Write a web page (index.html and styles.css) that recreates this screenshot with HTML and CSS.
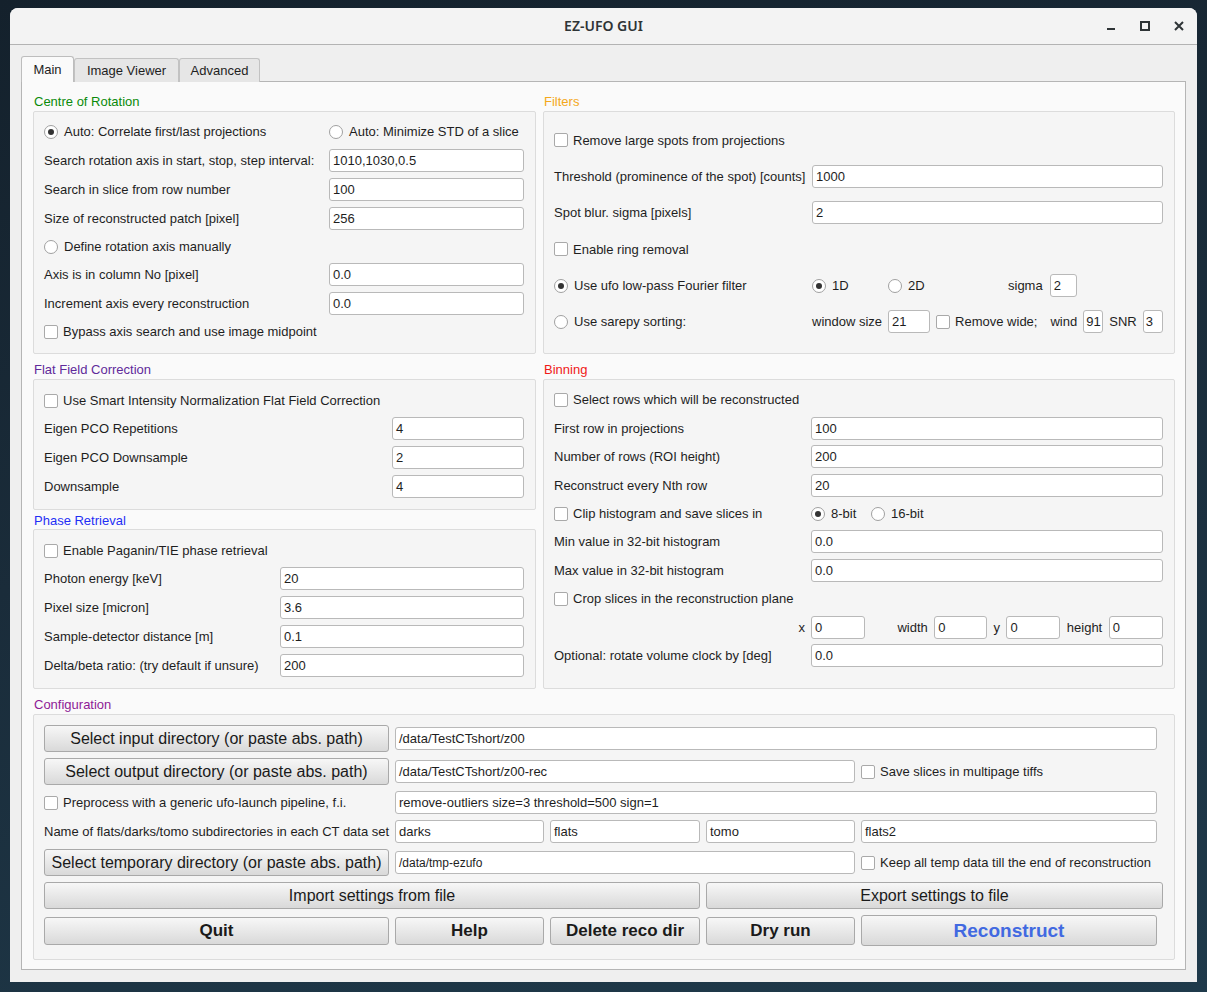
FILE: index.html
```html
<!DOCTYPE html>
<html>
<head>
<meta charset="utf-8">
<title>EZ-UFO GUI</title>
<link rel="stylesheet" href="styles.css">
</head>
<body>
<div class="desktop">
  <div class="window">
    <div class="titlebar">
      <span class="title">EZ-UFO GUI</span>
      <div class="wctl">
        <svg width="12" height="12" viewBox="0 0 12 12"><rect x="2" y="8" width="8" height="2" fill="#2e3436"/></svg>
        <svg width="12" height="12" viewBox="0 0 12 12"><rect x="2" y="2" width="8" height="8" fill="none" stroke="#2e3436" stroke-width="2"/></svg>
        <svg width="12" height="12" viewBox="0 0 12 12"><path d="M2 2 L10 10 M10 2 L2 10" stroke="#2e3436" stroke-width="2"/></svg>
      </div>
    </div>
    <div class="body">
      <div class="tabs">
        <div class="tab active t-main">Main</div>
        <div class="tab t-iv">Image Viewer</div>
        <div class="tab t-adv">Advanced</div>
      </div>
      <div class="pane">
        <div class="top">
          <div class="col">
            <div class="gtitle green">Centre of Rotation</div>
            <div class="gbox centre">
              <div class="row"><span class="radio on"></span><span>Auto: Correlate first/last projections</span></div>
              <div class="row"><span class="radio"></span><span>Auto: Minimize STD of a slice</span></div>
              <div class="row">Search rotation axis in start, stop, step interval:</div>
              <div class="inp">1010,1030,0.5</div>
              <div class="row">Search in slice from row number</div>
              <div class="inp">100</div>
              <div class="row">Size of reconstructed patch [pixel]</div>
              <div class="inp">256</div>
              <div class="row short span2"><span class="radio"></span><span>Define rotation axis manually</span></div>
              <div class="row">Axis is in column No [pixel]</div>
              <div class="inp">0.0</div>
              <div class="row">Increment axis every reconstruction</div>
              <div class="inp">0.0</div>
              <div class="row short span2"><span class="check"></span><span>Bypass axis search and use image midpoint</span></div>
            </div>
            <div class="gtitle purple sp7">Flat Field Correction</div>
            <div class="gbox flat">
              <div class="row short span2"><span class="check"></span><span>Use Smart Intensity Normalization Flat Field Correction</span></div>
              <div class="row">Eigen PCO Repetitions</div>
              <div class="inp">4</div>
              <div class="row">Eigen PCO Downsample</div>
              <div class="inp">2</div>
              <div class="row">Downsample</div>
              <div class="inp">4</div>
            </div>
            <div class="gtitle blue sp2">Phase Retrieval</div>
            <div class="gbox phase">
              <div class="row short span2"><span class="check"></span><span>Enable Paganin/TIE phase retrieval</span></div>
              <div class="row">Photon energy [keV]</div>
              <div class="inp">20</div>
              <div class="row">Pixel size [micron]</div>
              <div class="inp">3.6</div>
              <div class="row">Sample-detector distance [m]</div>
              <div class="inp">0.1</div>
              <div class="row">Delta/beta ratio: (try default if unsure)</div>
              <div class="inp">200</div>
            </div>
          </div>
          <div class="col right">
            <div class="gtitle orange">Filters</div>
            <div class="gbox filters">
              <div class="row span2"><span class="check"></span><span>Remove large spots from projections</span></div>
              <div class="row">Threshold (prominence of the spot) [counts]</div>
              <div class="inp">1000</div>
              <div class="row">Spot blur. sigma [pixels]</div>
              <div class="inp">2</div>
              <div class="row span2"><span class="check"></span><span>Enable ring removal</span></div>
              <div class="row"><span class="radio on"></span><span>Use ufo low-pass Fourier filter</span></div>
              <div class="row">
                <span class="opt w76"><span class="radio on"></span><span>1D</span></span>
                <span class="opt w114"><span class="radio"></span><span>2D</span></span>
                <span class="lbl sg">sigma</span>
                <span class="inp w27">2</span>
              </div>
              <div class="row"><span class="radio"></span><span>Use sarepy sorting:</span></div>
              <div class="row">
                <span class="lbl">window size</span>
                <span class="inp w42">21</span>
                <span class="check"></span><span class="lbl wide">Remove wide;</span>
                <span class="lbl">wind</span>
                <span class="inp w20">91</span>
                <span class="lbl">SNR</span>
                <span class="inp w20">3</span>
              </div>
            </div>
            <div class="gtitle red sp7">Binning</div>
            <div class="gbox binning">
              <div class="row span2"><span class="check"></span><span>Select rows which will be reconstructed</span></div>
              <div class="row">First row in projections</div>
              <div class="inp">100</div>
              <div class="row">Number of rows (ROI height)</div>
              <div class="inp">200</div>
              <div class="row">Reconstruct every Nth row</div>
              <div class="inp">20</div>
              <div class="row"><span class="check"></span><span>Clip histogram and save slices in</span></div>
              <div class="row">
                <span class="opt w54o"><span class="radio on"></span><span>8-bit</span></span>
                <span class="opt"><span class="radio"></span><span>16-bit</span></span>
              </div>
              <div class="row">Min value in 32-bit histogram</div>
              <div class="inp">0.0</div>
              <div class="row">Max value in 32-bit histogram</div>
              <div class="inp">0.0</div>
              <div class="row span2"><span class="check"></span><span>Crop slices in the reconstruction plane</span></div>
              <div class="row endx">x</div>
              <div class="row crop">
                <span class="inp w54">0</span>
                <span class="lbl cw">width</span>
                <span class="inp w53">0</span>
                <span class="lbl">y</span>
                <span class="inp w54">0</span>
                <span class="lbl">height</span>
                <span class="inp w54">0</span>
              </div>
              <div class="row">Optional: rotate volume clock by [deg]</div>
              <div class="inp">0.0</div>
            </div>
          </div>
        </div>
        <div class="gtitle magenta sp7">Configuration</div>
        <div class="gbox config">
          <div class="btn big">Select input directory (or paste abs. path)</div>
          <div class="inp c2-6">/data/TestCTshort/z00</div>

          <div class="btn big">Select output directory (or paste abs. path)</div>
          <div class="inp c2-5">/data/TestCTshort/z00-rec</div>
          <div class="row"><span class="check"></span><span>Save slices in multipage tiffs</span></div>

          <div class="row"><span class="check"></span><span>Preprocess with a generic ufo-launch pipeline, f.i.</span></div>
          <div class="inp c2-6">remove-outliers size=3 threshold=500 sign=1</div>

          <div class="row">Name of flats/darks/tomo subdirectories in each CT data set</div>
          <div class="inp">darks</div>
          <div class="inp">flats</div>
          <div class="inp">tomo</div>
          <div class="inp">flats2</div>

          <div class="btn big">Select temporary directory (or paste abs. path)</div>
          <div class="inp c2-5 small">/data/tmp-ezufo</div>
          <div class="row"><span class="check"></span><span>Keep all temp data till the end of reconstruction</span></div>

          <div class="btn big c1-4">Import settings from file</div>
          <div class="btn big c4-6 ext">Export settings to file</div>

          <div class="btn bold">Quit</div>
          <div class="btn bold">Help</div>
          <div class="btn bold">Delete reco dir</div>
          <div class="btn bold">Dry run</div>
          <div class="btn bold recon">Reconstruct</div>
        </div>
      </div>
    </div>
  </div>
</div>
</body>
</html>
```
FILE: styles.css
```css
* { box-sizing: border-box; }
html, body { margin: 0; padding: 0; }
body {
  width: 1207px;
  height: 992px;
  overflow: hidden;
  font-family: "Liberation Sans", Arial, sans-serif;
  font-size: 13px;
  color: #1e1e1e;
}
.desktop {
  width: 1207px;
  height: 992px;
  background: linear-gradient(165deg, #14212c 0%, #1a2c3a 45%, #1f3a4b 100%);
  padding: 8px 10px 10px 10px;
}
.window {
  width: 1187px;
  height: 974px;
  border-radius: 8px 8px 0 0;
  overflow: hidden;
  display: flex;
  flex-direction: column;
  background: #efefef;
}
.titlebar {
  height: 37px;
  flex: none;
  background: #f3f3f3;
  border-bottom: 1px solid #b3b3b3;
  display: flex;
  align-items: center;
  justify-content: center;
  position: relative;
}
.title {
  font-family: "Noto Sans", "DejaVu Sans", sans-serif;
  font-weight: 600;
  font-size: 14px;
  color: #2e3436;
  margin-top: -1px;
}
.wctl {
  position: absolute;
  right: 12px;
  top: 12px;
  display: flex;
  gap: 22px;
}
.wctl svg { display: block; }
.body {
  flex: 1;
  padding: 11px 11px 12px 11px;
  display: flex;
  flex-direction: column;
}
.tabs {
  display: flex;
  align-items: flex-end;
  height: 26px;
  position: relative;
  z-index: 1;
  margin-bottom: -1px;
}
.tab {
  height: 24px;
  background: #e6e6e6;
  border: 1px solid #c2c2c2;
  border-bottom: none;
  border-radius: 3px 3px 0 0;
  display: flex;
  align-items: center;
  justify-content: center;
  color: #1e1e1e;
}
.t-main { width: 53px; }
.t-iv { width: 105px; }
.t-adv { width: 81px; }
.tab.active {
  height: 26px;
  background: #fafafa;
  border-color: #bdbdbd;
  position: relative;
  z-index: 2;
}
.pane {
  flex: 1;
  background: #fafafa;
  border: 1px solid #b5b5b5;
  padding: 11px 10px 9px 11px;
  display: flex;
  flex-direction: column;
}
.top {
  display: grid;
  grid-template-columns: 503px 632px;
  column-gap: 7px;
}
.col { display: flex; flex-direction: column; }
.gtitle {
  height: 18px;
  line-height: 17px;
  padding-left: 1px;
  font-size: 13px;
}
.sp7 { margin-top: 7px; }
.sp2 { margin-top: 2px; height: 17px; }
.green { color: #0a8a0a; }
.orange { color: #f4a81c; }
.purple { color: #5f2a9a; }
.blue { color: #1f2ff5; }
.red { color: #f01818; }
.magenta { color: #8e1a96; }
.gbox {
  background: #f5f5f5;
  border: 1px solid #dcdcdc;
  border-radius: 2px;
  display: grid;
  align-items: center;
}
.row {
  display: flex;
  align-items: center;
  gap: 6px;
  white-space: nowrap;
  min-height: 21px;
}
.row > .check + span { margin-left: -1px; }
.span2 { grid-column: 1 / 3; }
.inp {
  height: 23px;
  background: #fff;
  border: 1px solid #b9b9b9;
  border-radius: 3px;
  padding: 0 3px;
  display: flex;
  align-items: center;
  white-space: nowrap;
  overflow: hidden;
  flex: none;
}
.check {
  width: 14px;
  height: 14px;
  flex: none;
  background: #fff;
  border: 1px solid #a9a9a9;
  border-radius: 2px;
  display: inline-block;
}
.radio {
  width: 14px;
  height: 14px;
  flex: none;
  background: #fff;
  border: 1px solid #a0a0a0;
  border-radius: 50%;
  display: inline-flex;
  align-items: center;
  justify-content: center;
}
.radio.on::after {
  content: "";
  width: 6px;
  height: 6px;
  border-radius: 50%;
  background: #333;
}

/* Centre of Rotation */
.centre {
  grid-template-columns: 285px 195px;
  grid-template-rows: 23px 23px 23px 23px 21px 23px 23px 21px;
  row-gap: 6px;
  padding: 8px 11px 11px 10px;
}
/* Flat field */
.flat {
  grid-template-columns: 348px 132px;
  grid-template-rows: 21px 23px 23px 23px;
  row-gap: 6px;
  padding: 10px 11px 11px 10px;
}
/* Phase */
.phase {
  grid-template-columns: 236px 244px;
  grid-template-rows: 21px 23px 23px 23px 23px;
  row-gap: 6px;
  padding: 10px 11px 11px 10px;
}
.filters {
  grid-template-columns: 258px 351px;
  grid-template-rows: repeat(6, 23px);
  row-gap: 13.4px;
  padding: 16.5px 11px 19.5px 10px;
}
.opt { display: inline-flex; align-items: center; gap: 6px; }
.w76 { width: 70px; }
.w114 { width: 114px; }
.w54o { width: 54px; }
.sg { margin-right: 1px; }
.lbl { display: inline-block; }
.wide { margin-right: 7px; }
.w27 { width: 27px; }
.w42 { width: 42px; }
.w20 { width: 20px; padding: 0 2px; }
.w53 { width: 53px; }
.w54 { width: 54px; }
.binning {
  grid-template-columns: 257px 352px;
  grid-template-rows: repeat(10, 23px);
  row-gap: 5.4px;
  padding: 8.5px 11px 20.9px 10px;
}
.endx { justify-content: flex-end; padding-right: 6px; }
.crop { gap: 6.4px; }
.cw { margin-left: 26px; }

/* Configuration */
.config {
  grid-template-columns: 345px 149px 150px 149px 296px;
  grid-template-rows: 27px 27px 23px 23px 27px 27px 31px;
  gap: 6px;
  padding: 10px 10px 13px 10px;
}
.c2-6 { grid-column: 2 / 6; }
.c2-5 { grid-column: 2 / 5; }
.c1-4 { grid-column: 1 / 4; }
.c4-6 { grid-column: 4 / 6; }
.ext { margin-right: -6px; }
.small { font-size: 12px; }
.btn {
  height: 27px;
  border: 1px solid #a9a9a9;
  border-radius: 3px;
  background: linear-gradient(#f7f7f7, #d9d9d9);
  display: flex;
  align-items: center;
  justify-content: center;
  white-space: nowrap;
  color: #1a1a1a;
}
.big { font-size: 16px; }
.bold { font-size: 17px; font-weight: 700; height: 28px; }
.recon { color: #4169e1; font-size: 19px; height: 31px; }
```
